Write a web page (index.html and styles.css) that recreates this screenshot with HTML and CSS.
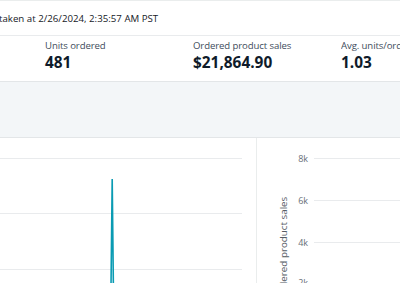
FILE: index.html
```html
<!DOCTYPE html>
<html lang="en">
<head>
    <meta charset="UTF-8">
    <meta name="viewport" content="width=device-width, initial-scale=1.0">
    <title>Sales Dashboard</title>
    <link rel="stylesheet" href="styles.css">
</head>
<body>
    <div class="snapshot">taken at 2/26/2024, 2:35:57 AM PST</div>

    <div class="metrics">
        <div class="metric">
            <div class="metric-label">Units ordered</div>
            <div class="metric-value">481</div>
        </div>
        <div class="metric">
            <div class="metric-label">Ordered product sales</div>
            <div class="metric-value">$21,864.90</div>
        </div>
        <div class="metric metric-last">
            <div class="metric-label">Avg. units/order item</div>
            <div class="metric-value">1.03</div>
        </div>
    </div>

    <div class="band"></div>

    <div class="charts">
        <div class="chart chart-left">
            <svg width="256" height="145" viewBox="0 0 256 145">
                <g class="grid">
                    <line x1="0" y1="20.5" x2="242" y2="20.5"></line>
                    <line x1="0" y1="75.5" x2="242" y2="75.5"></line>
                    <line x1="0" y1="131.5" x2="242" y2="131.5"></line>
                </g>
                <polyline class="series" points="111,150 112.2,41 113.4,150"></polyline>
            </svg>
        </div>
        <div class="chart chart-right">
            <svg width="144" height="145" viewBox="0 0 144 145">
                <text class="axis-title" transform="translate(30 110) rotate(-90)">Ordered product sales</text>
                <g class="ticks">
                    <text x="51" y="24">8k</text>
                    <text x="51" y="66">6k</text>
                    <text x="51" y="108">4k</text>
                    <text x="51" y="148">2k</text>
                </g>
                <g class="grid">
                    <line x1="57" y1="20.5" x2="144" y2="20.5"></line>
                    <line x1="57" y1="62.5" x2="144" y2="62.5"></line>
                    <line x1="57" y1="104.5" x2="144" y2="104.5"></line>
                </g>
            </svg>
        </div>
    </div>
</body>
</html>
```

FILE: styles.css
```css
body {
    font-family: 'Open Sans', 'Liberation Sans', sans-serif;
    margin: 0;
    padding: 0;
    background-color: white;
    color: #16191f;
    overflow: hidden;
}

.snapshot {
    height: 36px;
    box-sizing: border-box;
    border-top: 1px solid #eaeded;
    border-bottom: 1px solid #e9ebed;
    display: flex;
    align-items: center;
    font-size: 9.7px;
    color: #16191f;
    margin-left: -1px;
}

.metrics {
    display: flex;
    height: 46px;
    box-sizing: border-box;
    padding: 3px 0 0 45px;
    border-bottom: 1px solid #e3e6e8;
    white-space: nowrap;
}

.metric {
    width: 148px;
    flex-shrink: 0;
}

.metric-last {
    width: 59px;
    overflow: hidden;
}

.metric-label {
    font-size: 9.6px;
    letter-spacing: -0.1px;
    color: #414d5c;
    line-height: 14px;
}

.metric-value {
    margin-top: 2px;
    font-size: 15.4px;
    font-weight: 700;
    color: #0f1b2a;
    line-height: 16px;
}

.band {
    height: 56px;
    box-sizing: border-box;
    background-color: #f3f6f8;
    border-bottom: 1px solid #e3e6e8;
}

.charts {
    display: flex;
}

.chart-left {
    width: 256px;
    border-right: 1px solid #eaeded;
}

.chart svg {
    display: block;
}

.grid line {
    stroke: #e9ebed;
    stroke-width: 1;
}

.series {
    fill: none;
    stroke: #0a9bb3;
    stroke-width: 1.6;
    stroke-linejoin: miter;
}

.ticks text {
    font-size: 9px;
    fill: #687078;
    text-anchor: end;
}

.axis-title {
    font-size: 9.8px;
    fill: #545b64;
    text-anchor: middle;
}
```
